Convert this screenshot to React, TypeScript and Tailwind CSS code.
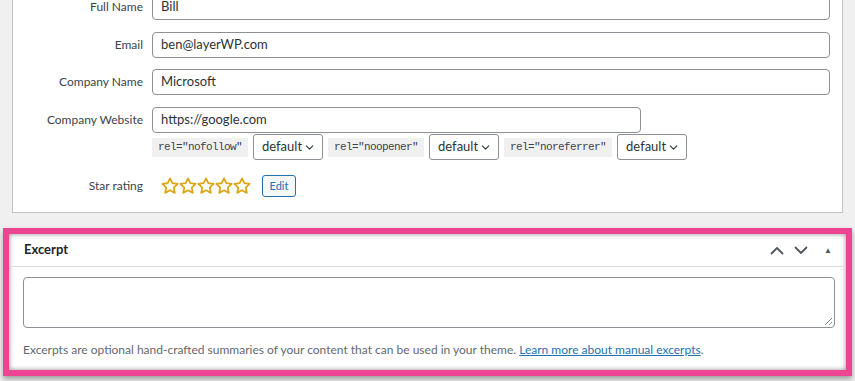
import { ChevronDown } from "lucide-react"

const font = { fontFamily: "Lato, 'Noto Sans', sans-serif" }

const Star = () => (
  <svg width="18" height="18" viewBox="0 0 24 24" fill="none" stroke="#dba617" strokeWidth="2.4" strokeLinejoin="round">
    <path d="M12 1.8l3.1 6.5 7.1.9-5.2 4.9 1.4 7.1L12 17.7l-6.4 3.5 1.4-7.1-5.2-4.9 7.1-.9z" />
  </svg>
)

const Chevron = ({ up }: { up?: boolean }) => (
  <svg width="14" height="9" viewBox="0 0 14 9" fill="none" stroke="#50575e" strokeWidth="1.8" strokeLinecap="round" strokeLinejoin="round">
    <path d={up ? "M1.5 7.5L7 2l5.5 5.5" : "M1.5 1.5L7 7l5.5-5.5"} />
  </svg>
)

const Field = ({ label, value, wide = true, className = "" }: { label: string; value: string; wide?: boolean; className?: string }) => (
  <div className={"flex items-center " + className}>
    <label className="w-[130px] shrink-0 text-right text-[12px] text-[#3c434a]">{label}</label>
    <div
      className={
        "ml-[9px] flex h-[26px] items-center rounded-[4px] border border-[#8c8f94] bg-white px-[8px] text-[13px] text-[#2c3338] " +
        (wide ? "w-[678px]" : "w-[489px]")
      }
    >
      {value}
    </div>
  </div>
)

const Rel = ({ text }: { text: string }) => (
  <code className="flex h-[19px] items-center bg-[#f0f0f1] px-[6px] font-['Liberation_Mono',monospace] text-[11px] tracking-[-0.6px] text-[#3c434a]">
    {text}
  </code>
)

const Select = () => (
  <div className="flex h-[26px] w-[70px] items-center justify-between rounded-[3px] border border-[#8c8f94] bg-white pl-[8px] pr-[6px] text-[13px] text-[#2c3338]">
    default
    <ChevronDown size={13} strokeWidth={2} className="text-[#2c3338]" />
  </div>
)

export default function App() {
  return (
    <div className="h-[381px] w-[855px] overflow-hidden bg-[#f0f0f1]" style={font}>
      {/* Custom fields box */}
      <div className="mx-[12px] -mt-[10px] flex h-[223px] flex-col border border-[#c3c4c7] bg-white pt-[3px]">
        <Field label="Full Name" value="Bill" />
        <Field label="Email" value="ben@layerWP.com" className="mt-[12px]" />
        <Field label="Company Name" value="Microsoft" className="mt-[11px]" />
        <Field label="Company Website" value="https://google.com" wide={false} className="mt-[12px]" />
        <div className="ml-[139px] mt-[1px] flex items-center gap-[5px]">
          <Rel text='rel="nofollow"' />
          <Select />
          <Rel text='rel="noopener"' />
          <Select />
          <Rel text='rel="noreferrer"' />
          <Select />
        </div>
        <div className="mt-[15px] flex items-center">
          <label className="w-[130px] shrink-0 text-right text-[12px] text-[#3c434a]">Star rating</label>
          <div className="ml-[18px] flex">
            {[0, 1, 2, 3, 4].map((i) => (
              <Star key={i} />
            ))}
          </div>
          <button className="ml-[11px] h-[22px] w-[34px] rounded-[3px] border border-[#2271b1] bg-[#f6f7f7] text-[11px] text-[#2271b1]">
            Edit
          </button>
        </div>
      </div>

      {/* Excerpt box, highlighted */}
      <div className="ml-[3px] mt-[15px] h-[148px] w-[849px] border-[6px] border-[#ee4592] bg-white shadow-[0_3px_5px_rgba(0,0,0,0.35),inset_0_0_5px_rgba(0,0,0,0.45)]">
        <div className="flex h-[33px] items-center justify-between border-b border-[#dcdcde] pl-[15px] pr-[14px]">
          <h2 className="text-[13px] font-bold text-[#1d2327]">Excerpt</h2>
          <div className="flex items-center gap-[10px]">
            <Chevron up />
            <Chevron />
            <span className="ml-[6px] text-[8px] leading-none text-[#50575e]">▲</span>
          </div>
        </div>
        <div className="px-[14px] pt-[10px]">
          <div className="relative h-[51px] w-[812px] rounded-[4px] border border-[#8c8f94] bg-white">
            <svg className="absolute bottom-[1px] right-[1px]" width="9" height="9" viewBox="0 0 9 9" stroke="#8c8f94" strokeWidth="1">
              <path d="M8 1L1 8M8 5L5 8" />
            </svg>
          </div>
          <p className="mt-[13px] text-[12px] text-[#646970]">
            Excerpts are optional hand-crafted summaries of your content that can be used in your theme.{" "}
            <a className="text-[#2271b1] underline">Learn more about manual excerpts</a>.
          </p>
        </div>
      </div>
    </div>
  )
}
